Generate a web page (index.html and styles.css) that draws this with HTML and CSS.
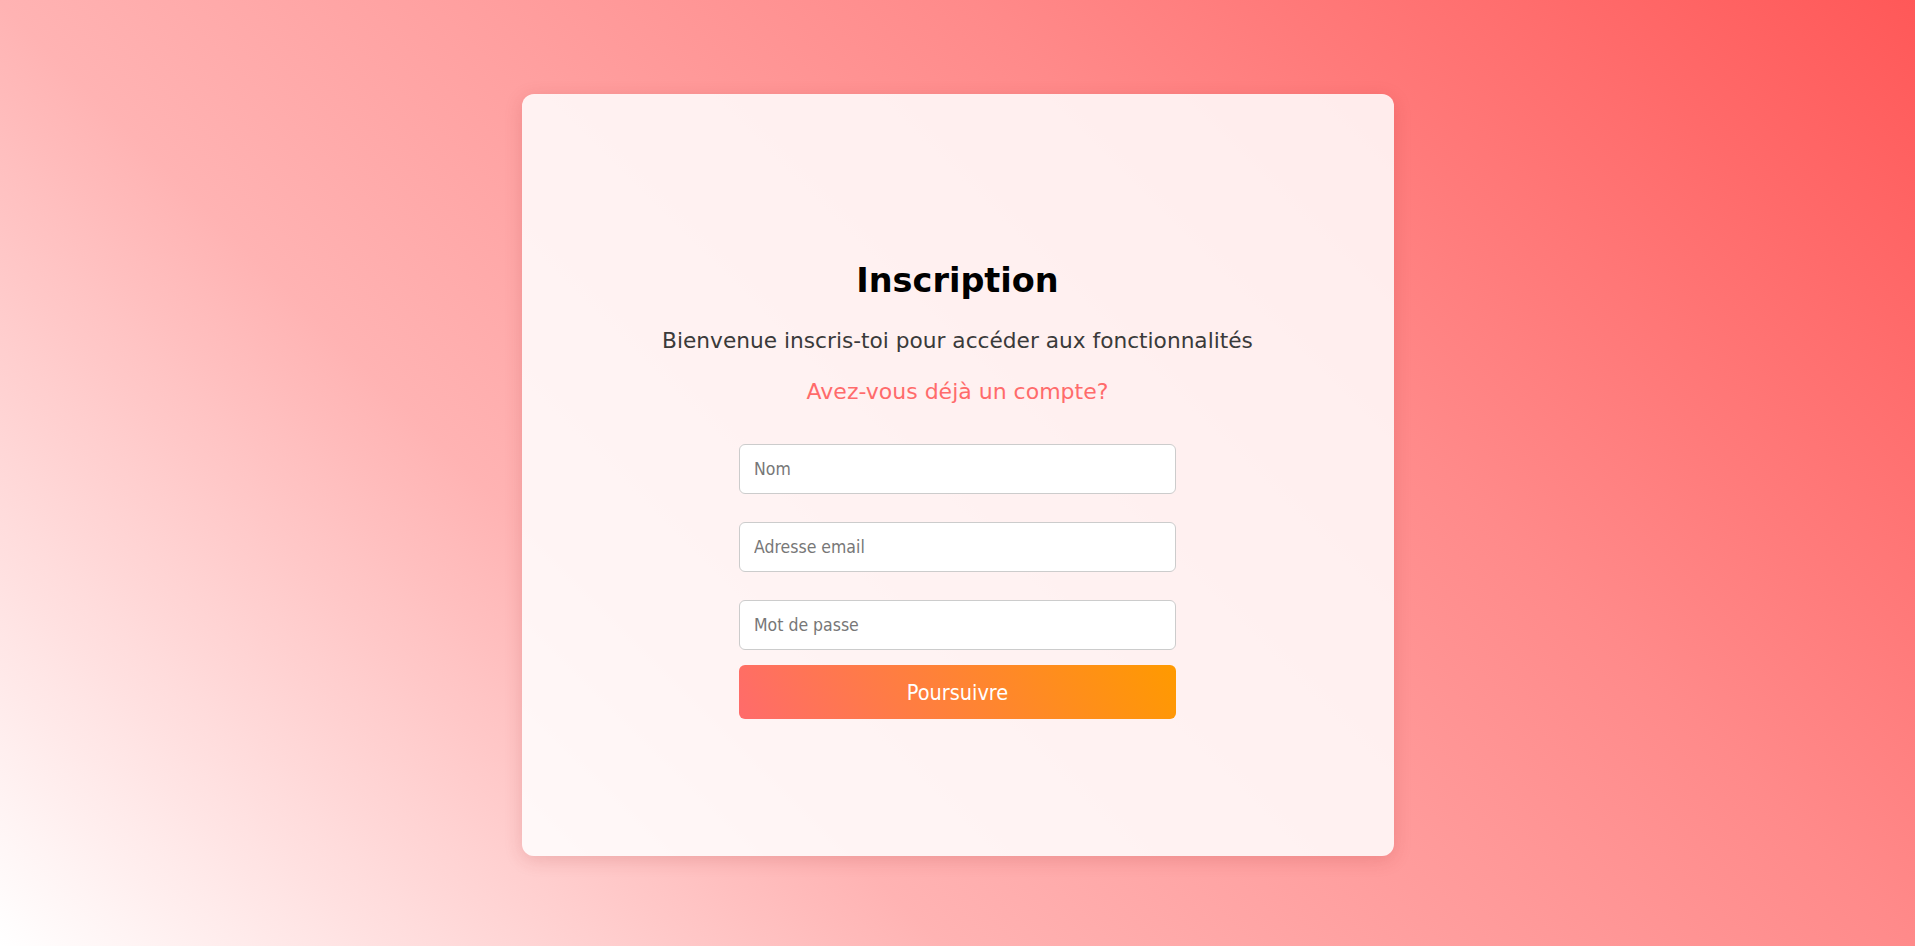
FILE: index.html
```html
<!DOCTYPE html>
<html lang="fr">
<head>
<meta charset="utf-8">
<title>Inscription</title>
<link rel="stylesheet" href="styles.css">
</head>
<body>
<main class="page">
  <section class="card">
    <h1 class="title">Inscription</h1>
    <p class="subtitle">Bienvenue inscris-toi pour accéder aux fonctionnalités</p>
    <a class="login-link" href="#">Avez-vous déjà un compte?</a>
    <form class="form">
      <input class="field" type="text" placeholder="Nom">
      <input class="field" type="email" placeholder="Adresse email">
      <input class="field" type="password" placeholder="Mot de passe">
      <button class="submit" type="button">Poursuivre</button>
    </form>
  </section>
</main>
</body>
</html>
```

FILE: styles.css
```css
html, body {
  margin: 0;
  padding: 0;
  height: 100%;
}

body {
  font-family: "DejaVu Sans", Verdana, sans-serif;
  background: linear-gradient(45deg, #ffffff 0%, #ffb3b3 33%, #ff8a8a 67%, #ff5858 100%);
}

.page {
  min-height: 100vh;
  display: flex;
  align-items: center;
  justify-content: center;
}

.card {
  box-sizing: border-box;
  width: 872px;
  height: 762px;
  margin-top: 4px;
  padding-top: 167px;
  border-radius: 12px;
  background: rgba(255, 255, 255, 0.86);
  box-shadow: 0 4px 18px rgba(160, 40, 40, 0.18);
  display: flex;
  flex-direction: column;
  align-items: center;
}

.title {
  margin: 0;
  font-size: 33.5px;
  line-height: 40px;
  font-weight: bold;
  color: #000;
}

.subtitle {
  margin: 27px 0 0;
  font-size: 21.7px;
  line-height: 26px;
  color: #3a3a3a;
}

.login-link {
  margin-top: 25px;
  font-size: 22px;
  line-height: 26px;
  color: #ff6b6b;
  text-decoration: none;
}

.form {
  margin-top: 39px;
  width: 437px;
  display: flex;
  flex-direction: column;
}

.field {
  box-sizing: border-box;
  height: 50px;
  width: 100%;
  margin: 0 0 28px;
  padding: 0 14px;
  border: 1px solid #cccccc;
  border-radius: 6px;
  background: #fff;
  font-family: "DejaVu Sans Condensed", "DejaVu Sans", sans-serif;
  font-size: 17.5px;
  color: #333;
  outline: none;
}

.field:last-of-type {
  margin-bottom: 15px;
}

.field::placeholder {
  color: #777777;
}

.submit {
  box-sizing: border-box;
  height: 54px;
  width: 100%;
  margin: 0;
  border: none;
  border-radius: 6px;
  background: linear-gradient(60deg, #ff6b6b 0%, #ff9a00 100%);
  color: #fff;
  font-family: "DejaVu Sans Condensed", "DejaVu Sans", sans-serif;
  font-size: 21.5px;
  cursor: pointer;
}
```
